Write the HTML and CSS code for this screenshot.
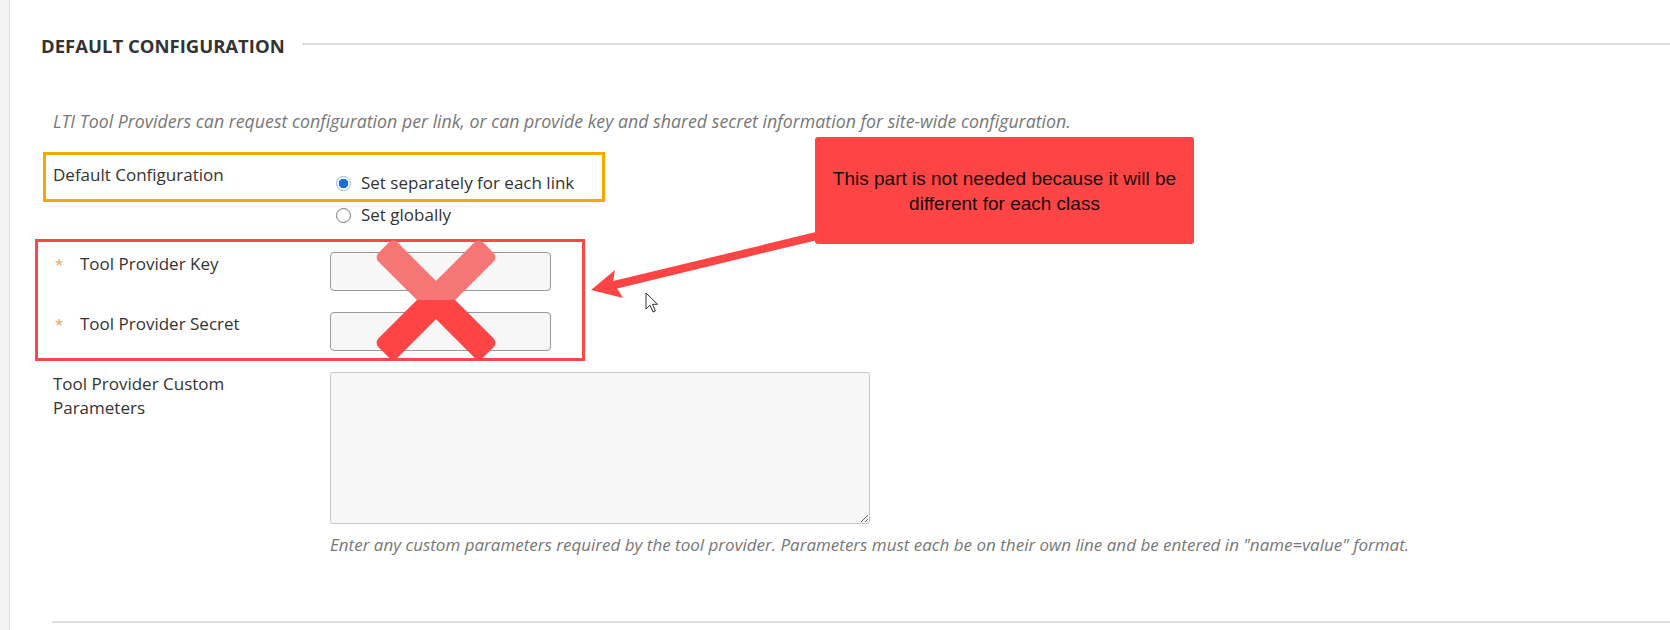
FILE: index.html
```html
<!DOCTYPE html>
<html lang="en">
<head>
<meta charset="utf-8">
<title>Default Configuration</title>
<link rel="stylesheet" href="styles.css">
</head>
<body>
<div class="page">
  <div class="gutter"></div>
  <main class="main">
    <div class="section-head">
      <h2 class="section-title">DEFAULT CONFIGURATION</h2>
      <span class="section-rule"></span>
    </div>
    <p class="intro">LTI Tool Providers can request configuration per link, or can provide key and shared secret information for site-wide configuration.</p>
    <div class="form">
      <div class="row row-config">
        <div class="label">Default Configuration</div>
        <div class="control radios">
          <div class="radio"><span class="dot dot-on"></span><span>Set separately for each link</span></div>
          <div class="radio"><span class="dot"></span><span>Set globally</span></div>
        </div>
      </div>
      <div class="row row-field">
        <div class="label label-req"><span class="star">*</span>Tool Provider Key</div>
        <div class="control"><div class="input"></div></div>
      </div>
      <div class="row row-field">
        <div class="label label-req"><span class="star">*</span>Tool Provider Secret</div>
        <div class="control"><div class="input"></div></div>
      </div>
      <div class="row row-field">
        <div class="label label-multi">Tool Provider Custom<br>Parameters</div>
        <div class="control">
          <textarea class="textarea" aria-label="Tool Provider Custom Parameters"></textarea>
          <p class="help">Enter any custom parameters required by the tool provider. Parameters must each be on their own line and be entered in "name=value" format.</p>
        </div>
      </div>
    </div>
    <div class="bottom-rule"></div>
  </main>
</div>

<div class="anno orange-box"></div>
<div class="anno red-box"></div>
<svg class="anno x-mark" width="122" height="122" viewBox="0 0 122 122">
  <defs>
    <clipPath id="x-top"><rect x="0" y="0" width="122" height="61"/></clipPath>
    <clipPath id="x-bottom"><rect x="0" y="61" width="122" height="61"/></clipPath>
  </defs>
  <g clip-path="url(#x-top)" fill="#f67575">
    <rect x="-13" y="47.5" width="148" height="27" rx="6" transform="rotate(45 61 61)"/>
    <rect x="-13" y="47.5" width="148" height="27" rx="6" transform="rotate(-45 61 61)"/>
  </g>
  <g clip-path="url(#x-bottom)" fill="#fe4444">
    <rect x="-13" y="47.5" width="148" height="27" rx="6" transform="rotate(45 61 61)"/>
    <rect x="-13" y="47.5" width="148" height="27" rx="6" transform="rotate(-45 61 61)"/>
  </g>
</svg>
<div class="anno callout">This part is not needed because it will be<br>different for each class</div>
<svg class="anno arrow" width="250" height="85" viewBox="0 0 250 85">
  <line x1="30" y1="61" x2="245" y2="9" stroke="#fe4545" stroke-width="8"/>
  <polygon points="11,65 35,45 33,57 43,73" fill="#fe4545"/>
</svg>
<svg class="anno cursor" width="14" height="22" viewBox="0 0 14 22">
  <path d="M1 1 L1 17 L5 13.2 L8 20 L10.4 19 L7.5 12.3 L12.5 12.3 Z" fill="#fff" stroke="#333" stroke-width="1" stroke-linejoin="round"/>
</svg>
</body>
</html>
```

FILE: styles.css
```css
* { box-sizing: border-box; }

html, body {
  margin: 0;
  padding: 0;
  background: #fff;
}

body {
  position: relative;
  width: 1670px;
  height: 630px;
  overflow: hidden;
  font-family: "Open Sans", "Noto Sans", sans-serif;
  color: #333;
}

.page {
  display: flex;
  min-height: 630px;
}

.gutter {
  width: 10px;
  flex: none;
  background: #f4f4f4;
  border-right: 1px solid #dedede;
}

.main {
  flex: 1;
  padding: 35px 0 0 31px;
}

.section-head {
  display: flex;
  align-items: center;
  gap: 17px;
}

.section-title {
  margin: 0;
  font-size: 18.5px;
  font-weight: 700;
  line-height: 22px;
  color: #333;
}

.section-rule {
  flex: 1;
  height: 2px;
  background: #dcdcdc;
  margin-bottom: 4px;
}

.intro {
  margin: 53px 0 0 12px;
  font-size: 17.75px;
  font-style: italic;
  line-height: 22px;
  color: #777;
  white-space: nowrap;
}

.form {
  padding-left: 12px;
}

.row {
  display: grid;
  grid-template-columns: 277px 1fr;
}

.row-config { margin-top: 32px; }
.row-field { margin-top: 22px; }
.row-field + .row-field { margin-top: 21px; }

.label {
  font-size: 17px;
  line-height: 22px;
  color: #333;
}

.label-req {
  display: flex;
  padding-top: 1px;
}

.star {
  width: 27px;
  padding-left: 2px;
  color: #e9a35a;
  font-size: 15px;
}

.label-multi {
  line-height: 24px;
}

.radios {
  padding-top: 2px;
}

.radio {
  display: flex;
  align-items: center;
  height: 32px;
  font-size: 17px;
  color: #333;
}

.dot {
  width: 15px;
  height: 15px;
  margin: 2px 10px 0 6px;
  border: 1px solid #777;
  border-radius: 50%;
  background: #fff;
}

.dot-on {
  border-color: #8fb6e6;
  background: radial-gradient(circle, #1a6fd6 0 4.5px, #fff 5.1px);
}

.input {
  width: 221px;
  height: 39px;
  background: #f7f7f7;
  border: 1px solid #999;
  border-radius: 4px;
}

.textarea {
  display: block;
  width: 540px;
  height: 152px;
  margin: 0;
  background: #f7f7f7;
  border: 1px solid #c8c8c8;
  border-radius: 3px;
  resize: both;
}

.help {
  margin: 10px 0 0;
  font-size: 17px;
  font-style: italic;
  line-height: 22px;
  color: #777;
  white-space: nowrap;
}

.bottom-rule {
  margin: 65px 0 0 11px;
  height: 2px;
  background: #e0e0e0;
}

/* annotations layered over the form */
.anno {
  position: absolute;
}

.orange-box {
  left: 43px;
  top: 152px;
  width: 562px;
  height: 50px;
  border: 3px solid #f6a800;
}

.red-box {
  left: 35px;
  top: 239px;
  width: 550px;
  height: 122px;
  border: 3px solid #ff4646;
}

.x-mark {
  left: 375px;
  top: 239px;
}

.callout {
  left: 815px;
  top: 137px;
  width: 379px;
  height: 107px;
  padding-top: 29px;
  background: #fe4545;
  border-radius: 3px;
  font-family: "Liberation Sans", Arial, sans-serif;
  font-size: 19px;
  line-height: 25px;
  text-align: center;
  color: #1a0a0a;
}

.arrow {
  left: 580px;
  top: 225px;
}

.cursor {
  left: 645px;
  top: 292px;
}
```
